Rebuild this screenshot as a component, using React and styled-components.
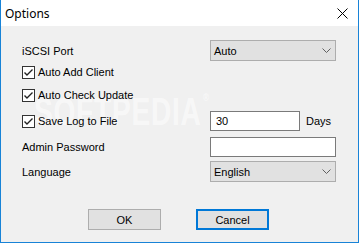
import React from 'react';
import styled, { createGlobalStyle } from 'styled-components';

const Global = createGlobalStyle`
  html, body { margin: 0; padding: 0; background: #f0f0f0; }
  body { width: 359px; height: 243px; overflow: hidden; }
`;

const Window = styled.div`
  position: relative;
  width: 359px;
  height: 243px;
  box-sizing: border-box;
  background: #f0f0f0;
  border-left: 1px solid #1883d7;
  border-right: 1px solid #1883d7;
  border-bottom: 1px solid #1883d7;
  display: flex;
  flex-direction: column;
  font-family: "Liberation Sans", Arial, sans-serif;
  font-size: 11px;
  color: #000;
`;

const TitleBar = styled.div`
  height: 26px;
  background: #fff;
  display: flex;
  align-items: center;
  justify-content: space-between;
  padding: 0 10px 0 4px;
`;

const Title = styled.span`
  font-family: "Segoe UI", "Noto Sans", sans-serif;
  font-size: 12px;
`;

const Body = styled.div`
  position: relative;
  z-index: 1;
  flex: 1;
  padding: 14px 0 0 20px;
  display: flex;
  flex-direction: column;
`;

const Row = styled.div`
  display: flex;
  align-items: center;
  height: ${p => p.$h}px;
  margin-top: ${p => p.$top || 0}px;
`;

const Label = styled.span`
  width: 189px;
  padding-left: 1px;
  box-sizing: border-box;
`;

const Cell = styled.div`
  width: 189px;
`;

const Check = styled.label`
  display: flex;
  align-items: center;
  gap: 3px;
  padding-left: 1px;
`;

const Box = styled.span`
  width: 13px;
  height: 13px;
  box-sizing: border-box;
  border: 1px solid #333;
  background: #fff;
  display: flex;
  align-items: center;
  justify-content: center;
`;

const Combo = styled.div`
  width: 126px;
  height: 21px;
  box-sizing: border-box;
  border: 1px solid #adadad;
  background: #e1e1e1;
  display: flex;
  align-items: center;
  justify-content: space-between;
  padding: 0 4px 0 3px;
`;

const Input = styled.div`
  width: ${p => p.$w}px;
  height: 20px;
  box-sizing: border-box;
  border: 1px solid #7a7a7a;
  background: #fff;
  display: flex;
  align-items: center;
  padding-left: 5px;
`;

const Unit = styled.span`
  margin-left: 6px;
`;

const Buttons = styled.div`
  display: flex;
  gap: 35px;
  margin: 27px 0 0 67px;
`;

const Button = styled.div`
  width: 73px;
  height: 21px;
  box-sizing: border-box;
  border: ${p => (p.$default ? '2px solid #0078d7' : '1px solid #adadad')};
  background: #e1e1e1;
  display: flex;
  align-items: center;
  justify-content: center;
`;

const Watermark = styled.div`
  position: absolute;
  z-index: 0;
  left: 33px;
  top: 91px;
  font-family: "Liberation Sans", Arial, sans-serif;
  font-weight: bold;
  font-size: 38px;
  letter-spacing: 1px;
  color: rgba(255, 255, 255, 0.55);
  transform: scaleX(0.74);
  transform-origin: left top;
  pointer-events: none;
  &::after {
    content: '®';
    font-size: 11px;
    vertical-align: top;
    margin-left: 2px;
  }
`;

const Chevron = () => (
  <svg width="9" height="5" viewBox="0 0 9 5">
    <path d="M0.5 0.5 L4.5 4.5 L8.5 0.5" fill="none" stroke="#606060" strokeWidth="1" />
  </svg>
);

const Tick = () => (
  <svg width="11" height="11" viewBox="0 0 11 11">
    <path d="M1.5 5.5 L4 8 L9.5 2.5" fill="none" stroke="#222" strokeWidth="1.4" />
  </svg>
);

const CloseIcon = () => (
  <svg width="11" height="11" viewBox="0 0 11 11">
    <path d="M0.5 0.5 L10.5 10.5 M10.5 0.5 L0.5 10.5" stroke="#000" strokeWidth="1" />
  </svg>
);

const CheckRow = ({ children }) => (
  <Check>
    <Box><Tick /></Box>
    {children}
  </Check>
);

export default function App() {
  return (
    <>
      <Global />
      <Window>
        <TitleBar>
          <Title>Options</Title>
          <CloseIcon />
        </TitleBar>
        <Watermark>SOFTPEDIA</Watermark>
        <Body>
          <Row $h={21}>
            <Label>iSCSI Port</Label>
            <Combo>Auto<Chevron /></Combo>
          </Row>
          <Row $h={22}>
            <CheckRow>Auto Add Client</CheckRow>
          </Row>
          <Row $h={24}>
            <CheckRow>Auto Check Update</CheckRow>
          </Row>
          <Row $h={20} $top={4}>
            <Cell>
              <CheckRow>Save Log to File</CheckRow>
            </Cell>
            <Input $w={90}>30</Input>
            <Unit>Days</Unit>
          </Row>
          <Row $h={20} $top={6}>
            <Label>Admin Password</Label>
            <Input $w={126} />
          </Row>
          <Row $h={21} $top={4}>
            <Label>Language</Label>
            <Combo>English<Chevron /></Combo>
          </Row>
          <Buttons>
            <Button>OK</Button>
            <Button $default>Cancel</Button>
          </Buttons>
        </Body>
      </Window>
    </>
  );
}
